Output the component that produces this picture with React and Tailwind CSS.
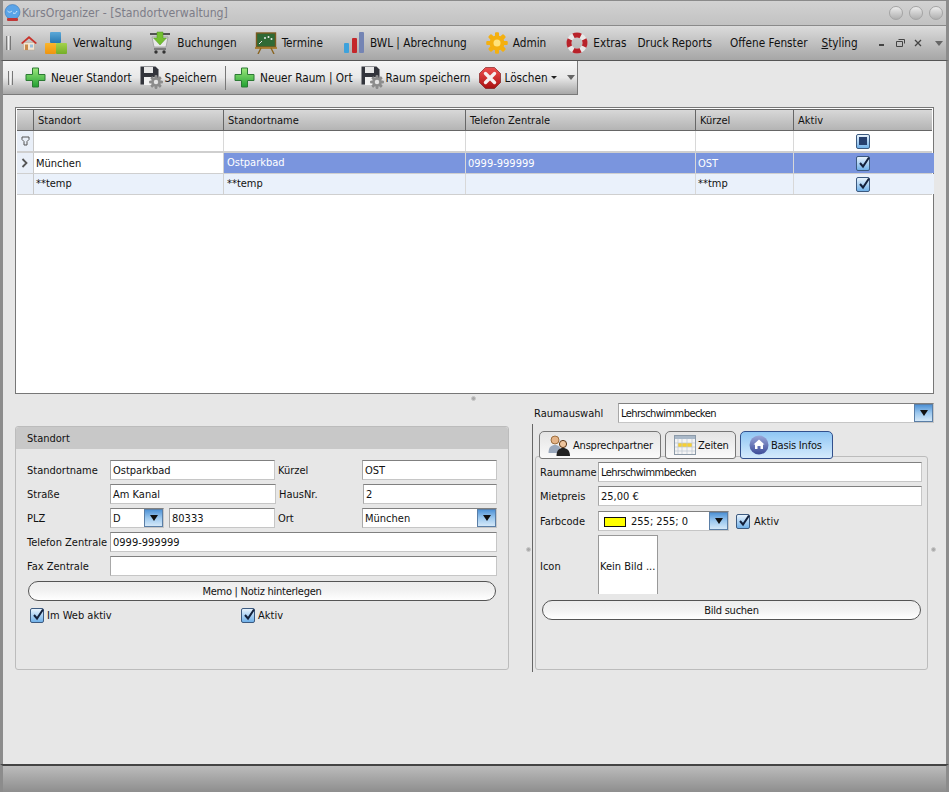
import React from "react";

const Grip = () => (
  <div className="flex gap-px h-[14px] shrink-0">
    <div className="w-px bg-[#777]"></div>
    <div className="w-px bg-[#f2f2f2]"></div>
    <div className="w-px bg-[#777]"></div>
  </div>
);

const Home = () => (
  <svg width="18" height="18" viewBox="0 0 18 18" className="shrink-0">
    <path d="M3.5 8.5h11V16h-11z" fill="#f3e6d2" stroke="#b9a58c" strokeWidth=".5" />
    <rect x="5" y="10.5" width="3" height="5.5" fill="#c98a4a" />
    <rect x="10" y="10.5" width="3" height="3" fill="#9cc0dc" />
    <path d="M1 9l8-7 8 7-1.4 1L9 4.5 2.4 10z" fill="#c8322a" />
  </svg>
);

const Blocks = () => (
  <svg width="24" height="24" viewBox="0 0 24 24" className="shrink-0">
    <defs>
      <linearGradient id="bb" x1="0" y1="0" x2="0" y2="1"><stop offset="0" stopColor="#5ba8d8" /><stop offset="1" stopColor="#2878b0" /></linearGradient>
      <linearGradient id="bo" x1="0" y1="0" x2="0" y2="1"><stop offset="0" stopColor="#fbb62c" /><stop offset="1" stopColor="#ee9410" /></linearGradient>
      <linearGradient id="bg" x1="0" y1="0" x2="0" y2="1"><stop offset="0" stopColor="#a4d24c" /><stop offset="1" stopColor="#74ae28" /></linearGradient>
    </defs>
    <rect x="6" y="1" width="11" height="11" rx="1" fill="url(#bb)" />
    <rect x="1" y="12" width="11" height="11" rx="1" fill="url(#bo)" />
    <rect x="12" y="12" width="11" height="11" rx="1" fill="url(#bg)" />
  </svg>
);

const Cart = () => (
  <svg width="22" height="24" viewBox="0 0 22 24" className="shrink-0">
    <path d="M1 3h20" stroke="#333" strokeWidth="1.6" />
    <path d="M3 6h16l-2 10H5z" fill="#e8e8e8" stroke="#9a9a9a" strokeWidth=".8" />
    <path d="M8 1h6v6h3.5L11 14 4.5 7H8z" fill="#74c030" stroke="#4e9420" strokeWidth=".5" />
    <path d="M5 18h12" stroke="#555" strokeWidth="1.2" />
    <circle cx="7" cy="21" r="1.7" fill="#333" />
    <circle cx="15" cy="21" r="1.7" fill="#333" />
  </svg>
);

const Board = () => (
  <svg width="22" height="22" viewBox="0 0 22 22" className="shrink-0">
    <rect x="1.5" y="1" width="19" height="14" fill="#2f6a35" stroke="#7a5a20" strokeWidth="1.4" />
    <path d="M4 12l3-3" stroke="#e8e8e8" strokeWidth="1" />
    <circle cx="10" cy="6" r="1" fill="#eee" />
    <circle cx="13.5" cy="5" r="1" fill="#eee" />
    <circle cx="16.5" cy="7" r="1" fill="#eee" />
    <path d="M0 16h22" stroke="#a87c2c" strokeWidth="1.8" />
    <path d="M6 16l-3 6M16 16l3 6" stroke="#8a6420" strokeWidth="1.4" />
  </svg>
);

const Bars = () => (
  <svg width="22" height="24" viewBox="0 0 22 24" className="shrink-0">
    <rect x="1" y="12" width="5" height="10" rx="1" fill="#3ea2dc" />
    <rect x="9" y="7" width="5" height="15" rx="1" fill="#c4262a" />
    <rect x="16" y="1" width="5" height="21" rx="1" fill="#7484b4" />
  </svg>
);

const Gear = ({ size = 22, fill = "#f4b010", inner = "#ffe27a" }) => {
  const teeth = [0, 45, 90, 135, 180, 225, 270, 315];
  return (
    <svg width={size} height={size} viewBox="0 0 22 22" className="shrink-0">
      {teeth.map((a) => (
        <rect key={a} x="9" y="0.5" width="4" height="21" rx="1" fill={fill} transform={`rotate(${a} 11 11)`} />
      ))}
      <circle cx="11" cy="11" r="7.5" fill={fill} />
      <circle cx="11" cy="11" r="3.5" fill={inner} />
    </svg>
  );
};

const Buoy = () => (
  <svg width="22" height="22" viewBox="0 0 22 22" className="shrink-0">
    <circle cx="11" cy="11" r="8" fill="none" stroke="#e8e8e8" strokeWidth="5" />
    <circle cx="11" cy="11" r="8" fill="none" stroke="#b8222a" strokeWidth="5" strokeDasharray="7.5 5" strokeDashoffset="3.7" />
  </svg>
);

const Plus = () => (
  <svg width="21" height="21" viewBox="0 0 21 21" className="shrink-0">
    <defs>
      <linearGradient id="pg" x1="0" y1="0" x2="0" y2="1"><stop offset="0" stopColor="#9ce87c" /><stop offset="1" stopColor="#20a030" /></linearGradient>
    </defs>
    <path d="M7.5 1h6v6.5H20v6h-6.5V20h-6v-6.5H1v-6h6.5z" fill="url(#pg)" stroke="#2c7a34" strokeWidth="1" />
  </svg>
);

const SaveGear = () => (
  <div className="relative w-[23px] h-[23px] shrink-0">
    <svg width="19" height="19" viewBox="0 0 19 19">
      <path d="M0.5 0.5h15l3 3v15H0.5z" fill="#33353c" />
      <rect x="4" y="1" width="9" height="6" fill="#e8e8e8" />
      <rect x="4" y="11" width="11" height="8" fill="#f2f2f2" />
    </svg>
    <div className="absolute right-0 bottom-0">
      <Gear size={14} fill="#8c8c8c" inner="#e4e4e4" />
    </div>
  </div>
);

const DeleteIcon = () => (
  <svg width="22" height="22" viewBox="0 0 22 22" className="shrink-0">
    <defs>
      <linearGradient id="dr" x1="0" y1="0" x2="0" y2="1"><stop offset="0" stopColor="#f05050" /><stop offset="1" stopColor="#a81010" /></linearGradient>
    </defs>
    <path d="M6.5 0.5h9l6 6v9l-6 6h-9l-6-6v-9z" fill="url(#dr)" stroke="#701010" strokeWidth=".6" />
    <path d="M6.5 6.5l9 9M15.5 6.5l-9 9" stroke="#f6f0f0" strokeWidth="3.4" strokeLinecap="round" />
  </svg>
);

const Users = () => (
  <svg width="23" height="22" viewBox="0 0 23 22" className="shrink-0">
    <circle cx="7" cy="6" r="4" fill="#e4b488" stroke="#8a5a28" strokeWidth=".8" />
    <path d="M0.5 19c0-6 3-8 6.500-8s6 2 6 8z" fill="#9aa8bc" />
    <circle cx="15" cy="10" r="3.600" fill="#eec49c" stroke="#5a3414" strokeWidth="1" />
    <path d="M8.500 22c0-6 3-8 6.500-8s7 2 7 8z" fill="#222" />
  </svg>
);

const Calendar = () => (
  <svg width="22" height="20" viewBox="0 0 22 20" className="shrink-0">
    <rect x="0.500" y="0.500" width="21" height="19" fill="#f4f4f4" stroke="#8c9aa8" />
    <rect x="1" y="1" width="20" height="3" fill="#a9b8c8" />
    <rect x="4" y="8" width="14" height="4" fill="#f8d030" />
    <path d="M4 4v15M8 4v15M13 4v15M18 4v15M1 8h20M1 12h20M1 16h20" stroke="#bcc6d0" strokeWidth=".7" />
  </svg>
);

const HomeRound = () => (
  <svg width="20" height="20" viewBox="0 0 20 20" className="shrink-0">
    <defs>
      <linearGradient id="hr" x1="0" y1="0" x2="0" y2="1"><stop offset="0" stopColor="#9aa6d8" /><stop offset="1" stopColor="#3c4c98" /></linearGradient>
    </defs>
    <circle cx="10" cy="10" r="9.500" fill="url(#hr)" />
    <path d="M10 4.500l5.500 5h-1.500v4.500h-2.500v-3h-3v3h-2.500v-4.500h-1.500z" fill="#fff" />
  </svg>
);

const Check = ({ checked = true }) => (
  <div className="relative w-[14px] h-[15px] shrink-0 rounded-[2px] border border-[#3c5a80] bg-gradient-to-b from-[#e8f3fc] to-[#6fb0e8] flex items-center justify-center">
    {checked ? (
      <svg width="15" height="15" viewBox="0 0 15 15" className="absolute -top-[2px] left-0">
        <path d="M3 8l3 3.500L12 2.500" fill="none" stroke="#14213c" strokeWidth="2" />
      </svg>
    ) : (
      <div className="w-2 h-2 bg-[#263f6e]"></div>
    )}
  </div>
);

const ComboArrow = () => (
  <div className="w-[19px] self-stretch shrink-0 bg-gradient-to-b from-[#4f93d6] via-[#9cc8ee] to-[#d4e8f8] border border-[#5a7ea6] flex items-center justify-center">
    <div className="w-0 h-0 border-x-[4px] border-x-transparent border-t-[6px] border-t-[#111]"></div>
  </div>
);

const fieldClass =
  "h-5 bg-white border border-[#c6c6c6] border-t-[#808080] border-l-[#a8a8a8] flex items-center pl-[2px] shrink-0 overflow-hidden whitespace-nowrap";

const Field = ({ w, children, className = "" }) => (
  <div className={fieldClass} style={{ width: w }}>
    <span className={`pt-[2px] ${className}`}>{children}</span>
  </div>
);

const Combo = ({ w, children, className = "" }) => (
  <div className={fieldClass} style={{ width: w }}>
    <span className={`flex-1 flex items-center gap-[5px] pt-[2px] ${className}`}>{children}</span>
    <ComboArrow />
  </div>
);

const Label = ({ children, className = "" }) => (
  <span className={`shrink-0 pt-[2px] ${className}`}>{children}</span>
);

const PillButton = ({ children, className }) => (
  <div
    className={`h-5 rounded-[10px] border border-[#555] bg-gradient-to-b from-[#ededed] via-[#f2f2f2] to-white flex items-center justify-center pt-[2px] tracking-[-0.25px] ${className}`}
  >
    {children}
  </div>
);

const MenuItem = ({ icon, label, className, gap = "gap-[5px]" }) => (
  <div className={`flex items-center shrink-0 ${gap} ${className}`}>
    {icon}
    <span>{label}</span>
  </div>
);

const columns = ["Standort", "Standortname", "Telefon Zentrale", "Kürzel", "Aktiv"];
const gridCols = "grid grid-cols-[17px_190px_242px_230px_98px_140px]";

const Row = ({ cells, selected, marker, alt }) => {
  const cellBg = selected ? "bg-[#7a95de] text-white" : alt ? "bg-[#eaf1fb]" : "bg-white";
  const shift = selected ? "pt-[2px]" : "";
  return (
    <div className={`${gridCols} h-[21px] border-b border-[#cfcfcf]`}>
      <div className="bg-[#e9eff8] border-r border-[#c8c8c8] flex items-center justify-center">
        {marker && (
          <svg width="8" height="10" viewBox="0 0 8 10">
            <path d="M1.500 1l4 4-4 4" fill="none" stroke="#555" strokeWidth="1.800" />
          </svg>
        )}
      </div>
      <div className={`border-r border-[#d0d0d0] pl-[2px] flex items-center ${shift} ${alt ? "bg-[#eaf1fb]" : "bg-white"}`}>
        {cells[0]}
      </div>
      <div className={`border-r border-[#d8d8d8] pl-[3px] flex items-center ${cellBg}`}>
        {cells[1]}
      </div>
      <div className={`border-r border-[#d8d8d8] pl-[2px] flex items-center ${shift} ${cellBg}`}>{cells[2]}</div>
      <div className={`border-r border-[#d8d8d8] pl-[2px] flex items-center ${shift} ${cellBg}`}>{cells[3]}</div>
      <div className={`flex items-center justify-center pr-[3px] ${cellBg}`}>
        <Check />
      </div>
    </div>
  );
};

const Tab = ({ icon, label, active, w }) => (
  <div
    style={{ width: w }}
    className={`h-[28px] rounded-t-[5px] rounded-b-[3px] border flex items-center pl-2 gap-[2px] shrink-0 tracking-[-0.2px] ${
      active
        ? "bg-gradient-to-b from-[#8fc6f4] to-[#d4eafc] border-[#32508c] z-10"
        : "bg-gradient-to-b from-[#e4e4e4] to-[#fafafa] border-[#777] z-10"
    }`}
  >
    {icon}
    <span className="pt-[2px]">{label}</span>
  </div>
);

const Dot = ({ className }) => (
  <div className={`absolute w-[5px] h-[5px] rounded-full bg-[#aaa] border border-[#c8c8c8] ${className}`}></div>
);

export default function App() {
  return (
    <div className="w-[949px] h-[792px] flex flex-col overflow-hidden bg-[#e7e7e7] text-[#111] text-[11px] leading-[14px] whitespace-nowrap font-['DejaVu_Sans_Condensed','Noto_Sans',sans-serif]">
      {/* Title */}
      <div className="h-[26px] shrink-0 bg-gradient-to-b from-[#d2d2d2] to-[#c2c2c2] border-y border-[#8a8a8a] border-x-[3px] border-x-[#8c8c8c] flex items-center pl-[1px] pr-[3px]">
        <svg width="17" height="18" viewBox="0 0 17 18" className="shrink-0">
          <circle cx="8.500" cy="8" r="7.500" fill="#5aa4e8" stroke="#3a78b8" strokeWidth=".6" />
          <path d="M3.500 7c2 2 3 1 4.500 0M9 9c2 1 3 0 4-2" stroke="#d8ecfc" fill="none" />
          <rect x="3" y="14" width="11" height="3" rx="1" fill="#c03838" />
        </svg>
        <span className="ml-[1px] text-[12.2px] text-[#7d7d88]">KursOrganizer - [Standortverwaltung]</span>
        <div className="ml-auto flex gap-[6px]">
          {[0, 1, 2].map((i) => (
            <div key={i} className="w-[14px] h-[14px] rounded-full border border-[#a4a4a4] bg-gradient-to-b from-[#ececec] to-[#b0b0b0]"></div>
          ))}
        </div>
      </div>

      {/* Menu */}
      <div className="h-[35px] shrink-0 text-[11.7px] bg-gradient-to-b from-[#dcdcdc] to-[#a6a6a6] border-b border-[#555] border-x-[3px] border-x-[#8c8c8c] flex items-center pl-[3px] pr-[3px]">
        <Grip />
        <div className="ml-[9px]"><Home /></div>
        <MenuItem className="ml-[6px]" icon={<Blocks />} label="Verwaltung" />
        <MenuItem className="ml-[17px]" gap="gap-[6px]" icon={<Cart />} label="Buchungen" />
        <MenuItem className="ml-[18px]" icon={<Board />} label="Termine" />
        <MenuItem className="ml-[20px]" icon={<Bars />} label="BWL | Abrechnung" />
        <MenuItem className="ml-[19px]" icon={<Gear />} label="Admin" />
        <MenuItem className="ml-[20px]" icon={<Buoy />} label="Extras" />
        <span className="ml-[11px]">Druck Reports</span>
        <span className="ml-[18px]">Offene Fenster</span>
        <span className="ml-[14px]"><span className="underline">S</span>tyling</span>
        <div className="ml-auto flex items-center">
          <div className="w-[5px] h-[2px] bg-[#444] mt-[3px]"></div>
          <svg width="9" height="8" viewBox="0 0 9 8" className="ml-[12px]"><path d="M2.500.500h6v4M.500 2.500h6v5h-6z" fill="none" stroke="#444" /></svg>
          <svg width="8" height="8" viewBox="0 0 8 8" className="ml-[9px]"><path d="M1 1l6 6M7 1l-6 6" stroke="#444" strokeWidth="1.300" /></svg>
          <div className="w-0 h-0 ml-[13px] border-x-[4px] border-x-transparent border-t-[5px] border-t-[#666]"></div>
        </div>
      </div>

      {/* Toolbar */}
      <div className="h-[35px] shrink-0 text-[11.7px] border-x-[3px] border-x-[#8c8c8c] flex items-start">
        <div className="w-[575px] h-[34px] bg-gradient-to-b from-[#f6f6f6] via-[#e8e8e8] to-[#a8a8a8] border-r border-b border-[#7a7a7a] flex items-center pl-[5px]">
          <Grip />
          <MenuItem className="ml-[12px]" icon={<Plus />} label="Neuer Standort" />
          <MenuItem className="ml-2" gap="gap-[2px]" icon={<SaveGear />} label="Speichern" />
          <div className="ml-2 w-px h-6 shrink-0 bg-[#777]"></div>
          <MenuItem className="ml-2" icon={<Plus />} label="Neuer Raum | Ort" />
          <MenuItem className="ml-2" gap="gap-[2px]" icon={<SaveGear />} label="Raum speichern" />
          <MenuItem className="ml-2" gap="gap-[4px]" icon={<DeleteIcon />} label="Löschen" />
          <div className="ml-[3px] w-0 h-0 shrink-0 border-x-[3px] border-x-transparent border-t-[3px] border-t-[#222]"></div>
          <div className="ml-[10px] w-0 h-0 shrink-0 border-x-[4px] border-x-transparent border-t-[5px] border-t-[#666]"></div>
        </div>
      </div>

      {/* Content */}
      <div className="flex-1 border-x-[3px] border-x-[#8c8c8c] relative px-3 pt-[11px] flex flex-col">
        <Dot className="left-[468px] top-[300px]" />
        <Dot className="left-[523px] top-[451px]" />
        <Dot className="left-[928px] top-[451px]" />

        {/* Table */}
        <div className="w-[919px] h-[287px] shrink-0 bg-white border border-[#777] p-px">
          <div className={`${gridCols} h-[22px] bg-gradient-to-b from-[#d8d8d8] to-[#b4b4b4] border-y border-[#666]`}>
            <div className="border-r border-[#666]"></div>
            {columns.map((c) => (
              <div key={c} className="border-r border-[#666] pl-[4px] pt-[2px] flex items-center last:border-r-0">{c}</div>
            ))}
          </div>
          <div className={`${gridCols} h-[22px] border-b-[2px] border-[#cfcfcf]`}>
            <div className="bg-[#e9eff8] border-r border-[#c8c8c8] flex items-center justify-center">
              <svg width="9" height="10" viewBox="0 0 9 10">
                <path d="M1 1h7v2.500L6 5.500V9H3V5.500L1 3.500z" fill="none" stroke="#555" />
              </svg>
            </div>
            <div className="border-r border-[#d8d8d8]"></div>
            <div className="border-r border-[#d8d8d8]"></div>
            <div className="border-r border-[#d8d8d8]"></div>
            <div className="border-r border-[#d8d8d8]"></div>
            <div className="flex items-center justify-center pr-[3px]"><Check checked={false} /></div>
          </div>
          <Row marker selected cells={["München", "Ostparkbad", "0999-999999", "OST"]} />
          <Row alt cells={["**temp", "**temp", "", "**tmp"]} />
        </div>

        {/* Bottom panels */}
        <div className="flex mt-[10px]">
          {/* Standort */}
          <div className="w-[494px] shrink-0 mt-[22px] h-[244px] rounded-[3px] border border-[#bcbcbc] flex flex-col">
            <div className="h-[22px] shrink-0 bg-[#c8c8c8] rounded-t-[3px] pl-[11px] pt-[2px] flex items-center">Standort</div>
            <div className="pl-[11px] pt-[11px] flex flex-col gap-1">
              <div className="flex items-center">
                <Label className="w-[83px]">Standortname</Label>
                <Field w={165}>Ostparkbad</Field>
                <Label className="w-[87px] pl-[3px]">Kürzel</Label>
                <Field w={135}>OST</Field>
              </div>
              <div className="flex items-center">
                <Label className="w-[83px]">Straße</Label>
                <Field w={166}>Am Kanal</Field>
                <Label className="w-[87px] pl-[3px]">HausNr.</Label>
                <Field w={134}>2</Field>
              </div>
              <div className="flex items-center">
                <Label className="w-[83px]">PLZ</Label>
                <Combo w={54}>D</Combo>
                <div className="ml-[5px]"><Field w={106}>80333</Field></div>
                <Label className="w-[87px] pl-[3px]">Ort</Label>
                <Combo w={135}>München</Combo>
              </div>
              <div className="flex items-center">
                <Label className="w-[83px]">Telefon Zentrale</Label>
                <Field w={387}>0999-999999</Field>
              </div>
              <div className="flex items-center">
                <Label className="w-[83px]">Fax Zentrale</Label>
                <Field w={387}></Field>
              </div>
              <PillButton className="w-[468px] ml-[1px] mt-px">Memo | Notiz hinterlegen</PillButton>
              <div className="flex items-center ml-[3px] mt-[2px]">
                <div className="flex items-center gap-[3px] w-[211px]"><Check /><Label>Im Web aktiv</Label></div>
                <div className="flex items-center gap-[3px]"><Check /><Label>Aktiv</Label></div>
              </div>
            </div>
          </div>

          {/* Raum */}
          <div className="ml-[25px] w-[400px] shrink-0 flex flex-col">
            <div className="flex items-center h-5 -mt-px">
              <Label className="w-[84px]">Raumauswahl</Label>
              <Combo w={316} className="tracking-[-0.55px]">Lehrschwimmbecken</Combo>
            </div>
            <div className="border-l border-[#666] -ml-[2px] h-[248px] mt-px pl-[2px]">
              <div className="flex gap-1 pl-1 pt-[7px]">
                <Tab w={122} icon={<Users />} label="Ansprechpartner" />
                <Tab w={71} icon={<Calendar />} label="Zeiten" />
                <Tab w={93} active icon={<HomeRound />} label="Basis Infos" />
              </div>
              <div className="w-[393px] h-[214px] -mt-[3px] rounded-[3px] border border-[#bcbcbc] pl-1 pt-[5px] flex flex-col gap-1">
                <div className="flex items-center">
                  <Label className="w-[58px]">Raumname</Label>
                  <Field w={324} className="tracking-[-0.55px]">Lehrschwimmbecken</Field>
                </div>
                <div className="flex items-center">
                  <Label className="w-[58px]">Mietpreis</Label>
                  <Field w={324}>25,00 €</Field>
                </div>
                <div className="flex items-center mt-px">
                  <Label className="w-[58px]">Farbcode</Label>
                  <Combo w={131}>
                    <span className="ml-[3px] w-[22px] h-[10px] bg-[#ffff00] border border-[#111]"></span>
                    255; 255; 0
                  </Combo>
                  <div className="ml-[7px] flex items-center gap-[4px]"><Check /><Label>Aktiv</Label></div>
                </div>
                <div className="flex items-center">
                  <span className="w-[58px] shrink-0 pt-[4px]">Icon</span>
                  <div className="w-[60px] h-[59px] bg-white border-t border-x border-[#999] flex items-center pl-[1px] pt-[4px] overflow-hidden">Kein Bild ...</div>
                </div>
                <PillButton className="w-[379px] ml-[2px] mt-[2px]">Bild suchen</PillButton>
              </div>
            </div>
          </div>
        </div>
      </div>

      {/* Status bar */}
      <div className="h-[28px] shrink-0 border-t-[2px] border-[#444] bg-gradient-to-b from-[#bcbcbc] to-[#8e8e8e] border-x-[3px] border-x-[#8c8c8c]"></div>
    </div>
  );
}
